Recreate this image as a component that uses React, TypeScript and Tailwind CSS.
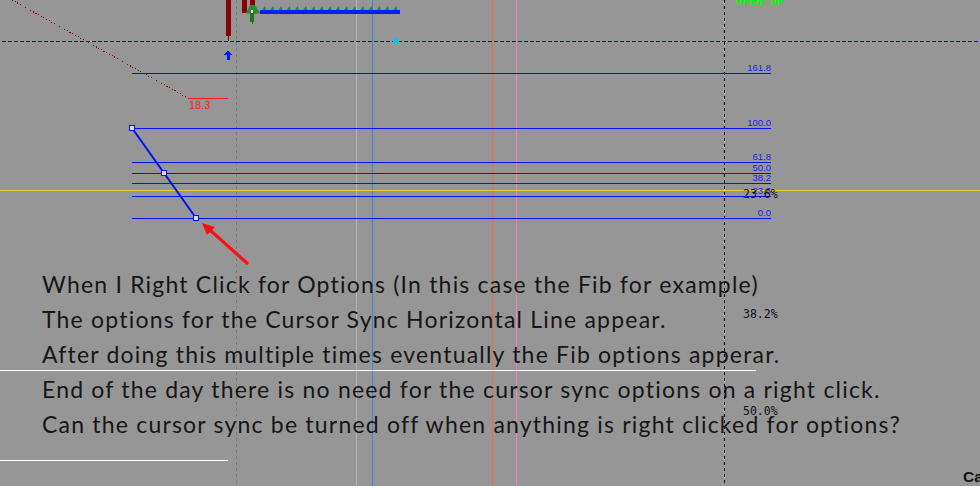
import React from "react";

const fibs = [
  { y: 73, label: "161.8", color: "#1010c0" },
  { y: 128, label: "100.0", color: "#0010ff" },
  { y: 162, label: "61.8", color: "#0010ff" },
  { y: 173, label: "50.0", color: "#0010ff" },
  { y: 183, label: "38.2", color: "#0010ff" },
  { y: 196, label: "23.6", color: "#0010ff" },
  { y: 218, label: "0.0", color: "#0010ff" },
];

const lines = [
  "When I Right Click for Options (In this case the Fib for example)",
  "The options for the Cursor Sync Horizontal Line appear.",
  "After doing this multiple times eventually the Fib options apperar.",
  "End of the day there is no need for the cursor sync options on a right click.",
  "Can the cursor sync be turned off when anything is right clicked for options?",
];

const marks: number[] = [];
for (let x = 262; x < 398; x += 8.2) marks.push(x);

function Chart() {
  return (
    <svg
      width={980}
      height={486}
      viewBox="0 0 980 486"
      className="absolute left-0 top-0"
      shapeRendering="crispEdges"
    >
      {/* red dotted trend */}
      <line x1={12} y1={0} x2={188} y2={98} stroke="#a00000" strokeWidth={1} strokeDasharray="1 2" />
      <line x1={188} y1={98.5} x2={228} y2={98.5} stroke="#ff1a1a" strokeWidth={1} />
      <text x={189} y={109} fontFamily="'Liberation Sans', Arial, sans-serif" fontSize={11} fill="#ff2020">18.3</text>

      {/* vertical lines */}
      <line x1={236.5} y1={0} x2={236.5} y2={486} stroke="#7c7c7c" strokeWidth={1} strokeDasharray="3 3" />
      <line x1={356.5} y1={0} x2={356.5} y2={486} stroke="#b4b4b4" strokeWidth={1} />
      <line x1={372.5} y1={0} x2={372.5} y2={486} stroke="#3b86d6" strokeWidth={1} />
      <line x1={492.5} y1={0} x2={492.5} y2={486} stroke="#f56a48" strokeWidth={1} />
      <line x1={516.5} y1={0} x2={516.5} y2={486} stroke="#ff7ac0" strokeWidth={1} />
      <line x1={724.5} y1={0} x2={724.5} y2={486} stroke="#000000" strokeWidth={1} strokeDasharray="3 3" />

      {/* candles */}
      <rect x={226} y={0} width={5} height={36} fill="#8b0000" />
      <line x1={228.5} y1={36} x2={228.5} y2={41} stroke="#8b0000" />
      <rect x={242} y={0} width={5} height={13} fill="#8b0000" />
      <rect x={250} y={0} width={5} height={8} fill="#8b0000" />
      <polygon points="246,13 250,5 255,5 260,13 256,14 250,14" fill="#2e8b3a" shapeRendering="auto" />
      <rect x={250} y={12} width={4} height={10} fill="#1f7a1f" />
      <line x1={252.5} y1={22} x2={252.5} y2={24} stroke="#1f7a1f" />
      <rect x={251} y={10} width={2} height={3} fill="#e8f0e8" />

      {/* blue band with markers */}
      <rect x={260} y={10} width={140} height={3.5} fill="#0022ff" />
      {marks.map((x, i) => (
        <polygon key={i} points={`${x},10 ${x + 3},6 ${x + 4},10`} fill="#1f8a50" shapeRendering="auto" />
      ))}

      {/* blue dashed cursor line */}
      <line x1={2} y1={41.5} x2={978} y2={41.5} stroke="#0000d0" strokeWidth={1} strokeDasharray="4 2" />
      <circle cx={396} cy={41} r={3} fill="#00c8ff" shapeRendering="auto" />

      {/* up arrow */}
      <path d="M228 50 L224 55 L226.5 55 L226.5 60 L229.5 60 L229.5 55 L232 55 Z" fill="#0018ff" />

      {/* yellow cursor line */}
      <line x1={0} y1={190.5} x2={980} y2={190.5} stroke="#e9cd2c" strokeWidth={1} />

      {/* fib lines */}
      {fibs.map((f) => (
        <g key={f.label}>
          <line x1={132} y1={f.y + 0.5} x2={771} y2={f.y + 0.5} stroke={f.color} strokeWidth={1} />
          <text
            x={771}
            y={f.y - 2}
            textAnchor="end"
            fontFamily="'Liberation Sans', Arial, sans-serif"
            fontSize={9.5}
            fill="#1a1aff"
          >
            {f.label}
          </text>
        </g>
      ))}

      {/* diagonal + handles */}
      <line x1={132} y1={128} x2={196} y2={218} stroke="#0010ff" strokeWidth={2} shapeRendering="auto" />
      {[
        [132, 128],
        [164, 173],
        [196, 218],
      ].map(([cx, cy]) => (
        <rect key={cx} x={cx - 2.5} y={cy - 2.5} width={5} height={5} fill="#d8d8f0" stroke="#0010ff" strokeWidth={1.3} />
      ))}

      {/* red arrow */}
      <g shapeRendering="auto">
        <line x1={248} y1={264} x2={210} y2={230} stroke="#ff1010" strokeWidth={3.2} />
        <polygon points="202,223 215,227 207,235" fill="#ff1010" />
      </g>

      {/* white lines */}
      <line x1={0} y1={370.5} x2={756} y2={370.5} stroke="#ffffff" strokeWidth={1} />
      <line x1={0} y1={460.5} x2={228} y2={460.5} stroke="#ffffff" strokeWidth={1} />

      {/* texts */}
      <text x={736} y={5} fontFamily="'DejaVu Sans Mono', monospace" fontSize={11.5} fontWeight={700} fill="#00ff00">OPEN UP</text>
      <text x={743} y={198} fontFamily="'DejaVu Sans Mono', monospace" fontSize={11.5} fill="#0d1020">23.6%</text>
      <text x={743} y={318} fontFamily="'DejaVu Sans Mono', monospace" fontSize={11.5} fill="#0d1020">38.2%</text>
      <text x={743} y={415} fontFamily="'DejaVu Sans Mono', monospace" fontSize={11.5} fill="#0d1020">50.0%</text>
      <text x={963} y={482} fontFamily="'Liberation Sans', Arial, sans-serif" fontSize={15.5} fontWeight={700} fill="#111111">Ca</text>
    </svg>
  );
}

export default function App() {
  return (
    <div className="relative w-[980px] h-[486px] overflow-hidden bg-[#969696]">
      <Chart />
      <div className="absolute left-[42px] top-[267px] flex flex-col text-[23px] leading-[35px] tracking-[1.2px] text-[#161616] font-['Lato',sans-serif] whitespace-nowrap">
        {lines.map((l) => (
          <div key={l}>{l}</div>
        ))}
      </div>
    </div>
  );
}
